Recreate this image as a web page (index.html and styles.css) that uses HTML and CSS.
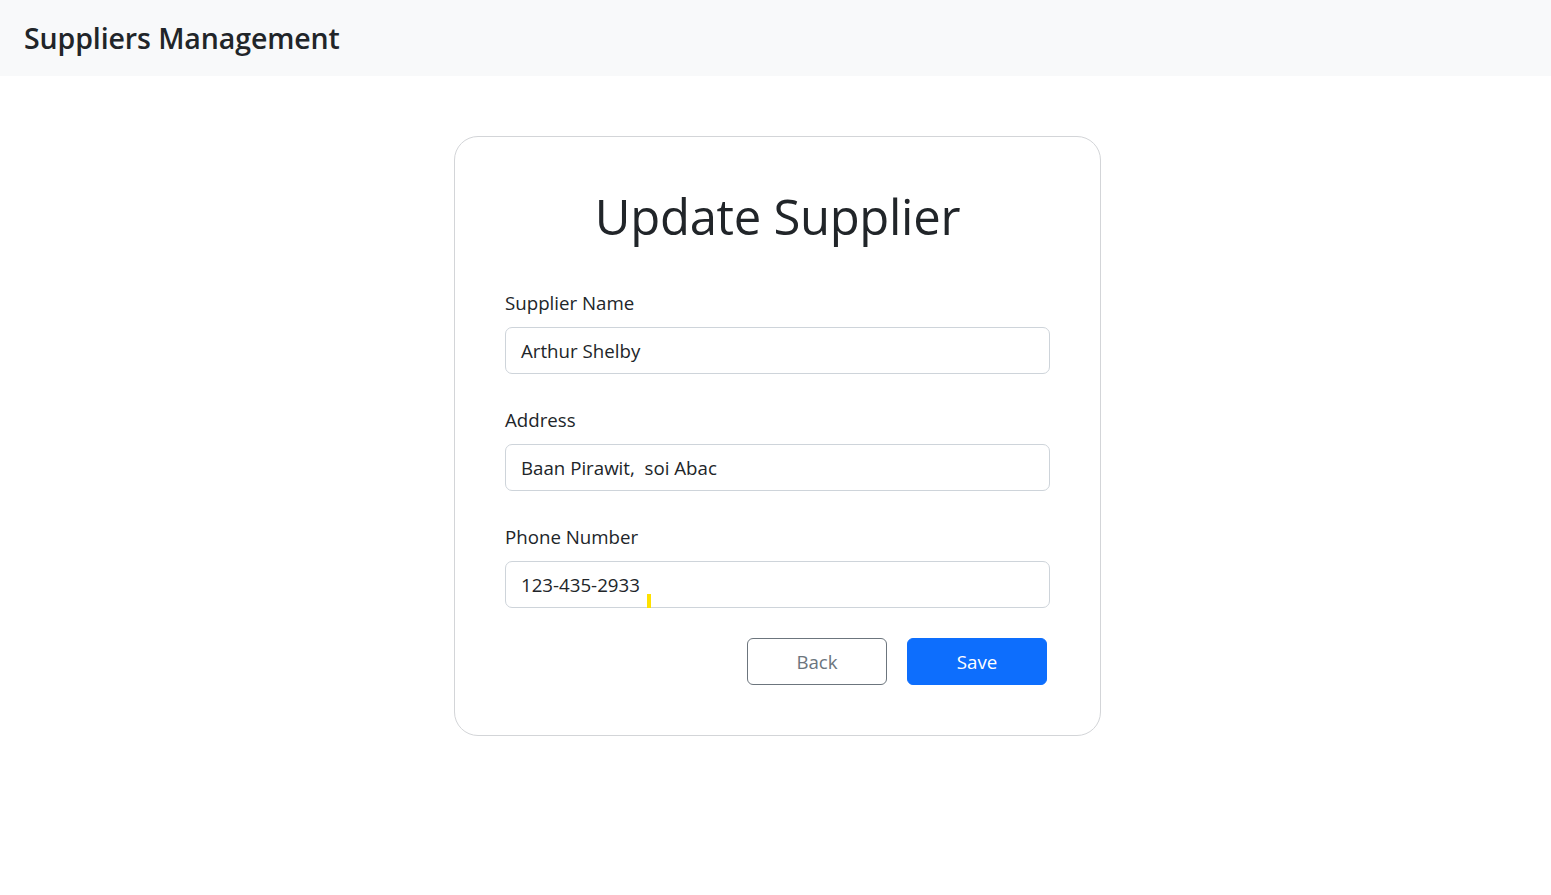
FILE: index.html
```html
<!DOCTYPE html>
<html lang="en">
<head>
<meta charset="utf-8">
<title>Suppliers Management</title>
<link rel="stylesheet" href="styles.css">
</head>
<body>
<header class="navbar">
  <span class="brand">Suppliers Management</span>
</header>
<main class="page">
  <section class="card">
    <h1 class="card-title">Update Supplier</h1>
    <form class="form">
      <div class="group">
        <label class="label" for="name">Supplier Name</label>
        <div class="field">Arthur Shelby</div>
      </div>
      <div class="group">
        <label class="label" for="addr">Address</label>
        <div class="field">Baan Pirawit,&nbsp; soi Abac</div>
      </div>
      <div class="group last">
        <label class="label" for="phone">Phone Number</label>
        <div class="field caret-wrap">123-435-2933<span class="caret"></span></div>
      </div>
      <div class="actions">
        <button type="button" class="btn btn-back">Back</button>
        <button type="button" class="btn btn-save">Save</button>
      </div>
    </form>
  </section>
</main>
</body>
</html>
```

FILE: styles.css
```css
* { box-sizing: border-box; }
html, body {
  margin: 0;
  padding: 0;
  background: #ffffff;
  color: #212529;
  font-family: "Open Sans", "Noto Sans", "Liberation Sans", sans-serif;
}
.navbar {
  height: 76px;
  background: #f8f9fa;
  display: flex;
  align-items: center;
  padding: 0 24px;
}
.brand {
  font-size: 28.5px;
  font-weight: 600;
  color: #212529;
  letter-spacing: -0.1px;
}
.page {
  display: flex;
  justify-content: center;
  padding-top: 60px;
}
.card {
  width: 647px;
  height: 600px;
  border: 1px solid #d3d5d8;
  border-radius: 24px;
  padding: 50px;
  margin-left: 4px;
}
.card-title {
  margin: 0 0 43px;
  text-align: center;
  font-size: 49px;
  font-weight: 500;
  line-height: 58px;
  letter-spacing: -0.3px;
  color: #212529;
}
.form { display: flex; flex-direction: column; }
.group { display: flex; flex-direction: column; margin-bottom: 31px; }
.group.last { margin-bottom: 30px; }
.label {
  font-size: 18.7px;
  line-height: 30px;
  margin-bottom: 9px;
}
.field {
  height: 47px;
  border: 1px solid #ced4da;
  border-radius: 7px;
  padding: 0 15px;
  display: flex;
  align-items: center;
  font-size: 18.7px;
  color: #212529;
}
.caret-wrap { position: relative; }
.caret {
  position: absolute;
  left: 141px;
  top: 32px;
  width: 4px;
  height: 14px;
  background: #ffe100;
}
.actions {
  display: flex;
  justify-content: flex-end;
  gap: 20px;
  padding-right: 3px;
}
.btn {
  width: 140px;
  height: 47px;
  border-radius: 6px;
  font-family: inherit;
  font-size: 18.7px;
  cursor: pointer;
}
.btn-back {
  background: #fff;
  border: 1px solid #6c757d;
  color: #6c757d;
}
.btn-save {
  background: #0d6efd;
  border: 1px solid #0d6efd;
  color: #fff;
}
```
